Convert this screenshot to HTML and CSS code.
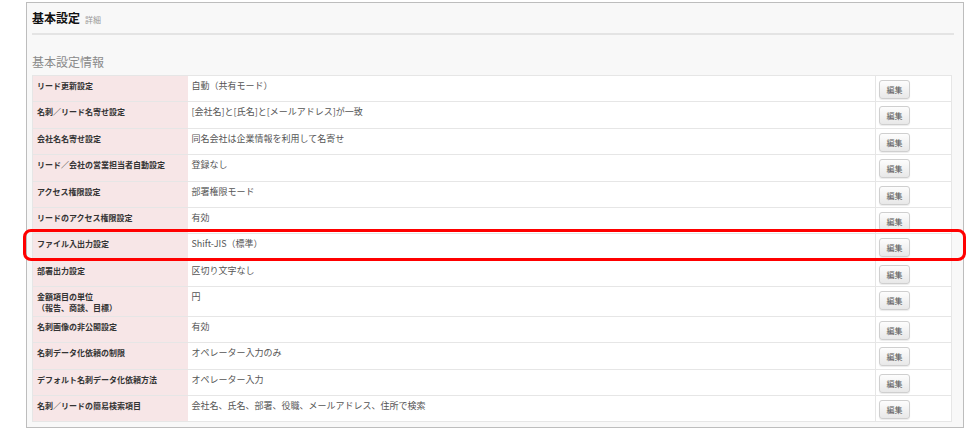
FILE: index.html
```html
<!DOCTYPE html>
<html lang="ja">
<head>
  <meta charset="UTF-8" />
  <title>基本設定</title>
  <link rel="stylesheet" href="styles.css">
</head>
<body>
  <div class="page">
    <div class="panel">
      <div class="panel-title">
        <h1>基本設定</h1>
        <span class="sub">詳細</span>
      </div>

      <h2 class="section-title">基本設定情報</h2>

      <table class="settings">
        <colgroup>
          <col class="col-label">
          <col class="col-value">
          <col class="col-btn">
        </colgroup>
        <tbody>
          <tr>
            <th>リード更新設定</th>
            <td>自動（共有モード）</td>
            <td class="btn-cell"><button>編集</button></td>
          </tr>
          <tr>
            <th>名刺／リード名寄せ設定</th>
            <td>[会社名]と[氏名]と[メールアドレス]が一致</td>
            <td class="btn-cell"><button>編集</button></td>
          </tr>
          <tr>
            <th>会社名名寄せ設定</th>
            <td>同名会社は企業情報を利用して名寄せ</td>
            <td class="btn-cell"><button>編集</button></td>
          </tr>
          <tr>
            <th>リード／会社の営業担当者自動設定</th>
            <td>登録なし</td>
            <td class="btn-cell"><button>編集</button></td>
          </tr>
          <tr>
            <th>アクセス権限設定</th>
            <td>部署権限モード</td>
            <td class="btn-cell"><button>編集</button></td>
          </tr>
          <tr>
            <th>リードのアクセス権限設定</th>
            <td>有効</td>
            <td class="btn-cell"><button>編集</button></td>
          </tr>
          <tr>
            <th>ファイル入出力設定</th>
            <td>Shift-JIS（標準）</td>
            <td class="btn-cell"><button>編集</button></td>
          </tr>
          <tr>
            <th>部署出力設定</th>
            <td>区切り文字なし</td>
            <td class="btn-cell"><button>編集</button></td>
          </tr>
          <tr>
            <th>金額項目の単位<br>（報告、商談、目標）</th>
            <td>円</td>
            <td class="btn-cell"><button>編集</button></td>
          </tr>
          <tr>
            <th>名刺画像の非公開設定</th>
            <td>有効</td>
            <td class="btn-cell"><button>編集</button></td>
          </tr>
          <tr>
            <th>名刺データ化依頼の制限</th>
            <td>オペレーター入力のみ</td>
            <td class="btn-cell"><button>編集</button></td>
          </tr>
          <tr>
            <th>デフォルト名刺データ化依頼方法</th>
            <td>オペレーター入力</td>
            <td class="btn-cell"><button>編集</button></td>
          </tr>
          <tr>
            <th>名刺／リードの簡易検索項目</th>
            <td>会社名、氏名、部署、役職、メールアドレス、住所で検索</td>
            <td class="btn-cell"><button>編集</button></td>
          </tr>
        </tbody>
      </table>
    </div>

    <!-- highlight frame around the file I/O row -->
    <div class="highlight"></div>
  </div>
</body>
</html>
```

FILE: styles.css
```css
body {
  margin: 0;
  background: #fff;
  font-family: "Noto Sans CJK JP", "Noto Sans", sans-serif;
  color: #333;
}

.page {
  position: relative;
  width: 980px;
  height: 443px;
}

.panel {
  margin: 2px 0 0 26px;
  width: 922px;
  padding: 0 9px 5px 5px;
  background: #f8f8f8;
  border: 1px solid #bdbdbd;
}

.panel-title {
  display: flex;
  align-items: baseline;
  gap: 5px;
  height: 30px;
  border-bottom: 2px solid #e4e4e4;
}

.panel-title h1 {
  margin: 0;
  font-size: 12px;
  line-height: 30px;
  font-weight: bold;
  color: #111;
}

.panel-title .sub {
  font-size: 8px;
  color: #999;
}

.section-title {
  margin: 0;
  padding-top: 19px;
  height: 21px;
  font-size: 12px;
  line-height: 16px;
  font-weight: normal;
  color: #8a8a8a;
}

.settings {
  width: 920px;
  border-collapse: collapse;
  background: #fff;
  border: 1px solid #e6e6e6;
  table-layout: fixed;
}

.col-label { width: 155px; }
.col-btn { width: 76px; }

.settings th,
.settings td {
  padding: 4px 4px 2.4px;
  vertical-align: top;
  text-align: left;
  line-height: 11.2px;
  border-top: 1px solid #e6e6e6;
}

.settings th {
  background: #f7e6e7;
  font-size: 8px;
  font-weight: bold;
  color: #333;
}

.settings td {
  font-size: 9px;
  color: #555;
}

.settings td.btn-cell {
  padding-left: 3px;
  border-left: 1px solid #e6e6e6;
}

.btn-cell button {
  display: block;
  width: 31px;
  height: 19px;
  padding: 0;
  font-family: inherit;
  font-size: 8px;
  color: #555;
  background: linear-gradient(to bottom, #fdfdfd, #e8e8e8);
  border: 1px solid #cfcfcf;
  border-radius: 3px;
  box-shadow: 0 1px 1px rgba(0, 0, 0, 0.08);
}

.highlight {
  position: absolute;
  left: 23px;
  top: 227px;
  width: 937px;
  height: 26px;
  border: 3px solid #ff0000;
  border-radius: 8px;
}
```
